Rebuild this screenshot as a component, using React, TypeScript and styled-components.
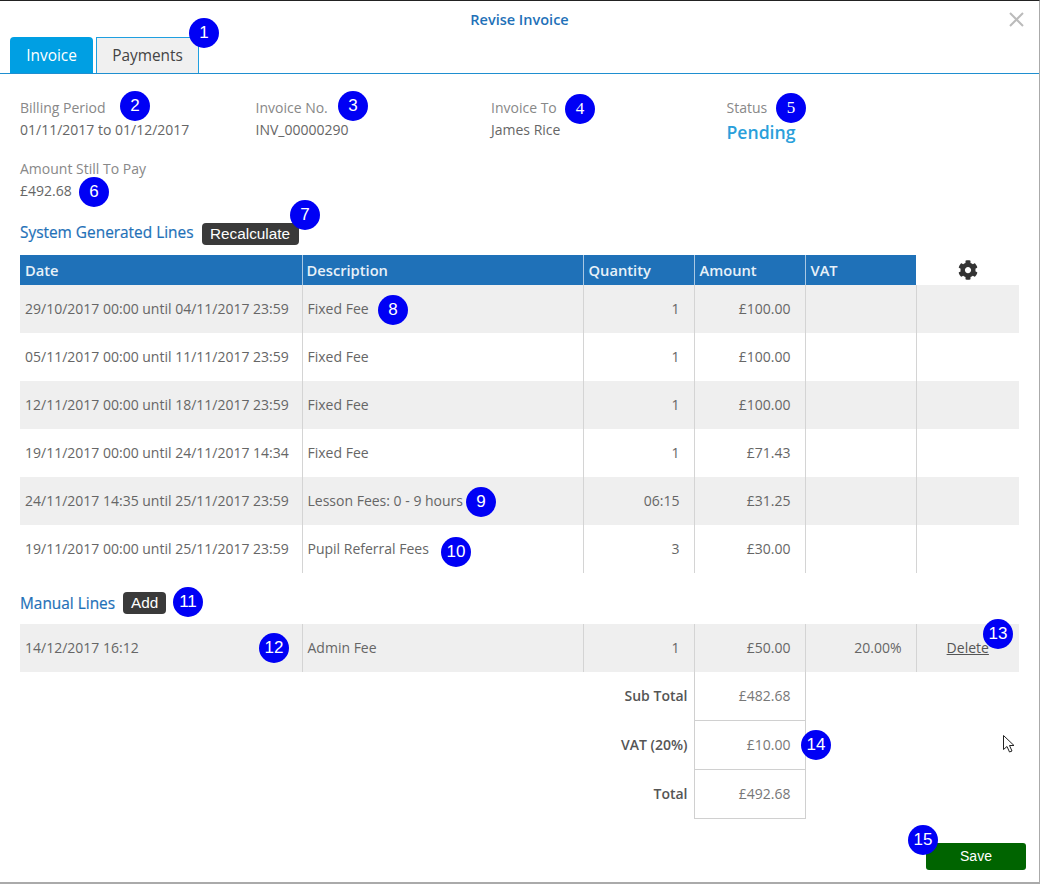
import React from 'react';
import styled, { createGlobalStyle } from 'styled-components';
import { FaCog } from 'react-icons/fa';

const GlobalStyle = createGlobalStyle`
  html, body {
    margin: 0;
    padding: 0;
    background: #fff;
  }
  body {
    font-family: "Open Sans", "Liberation Sans", sans-serif;
    font-size: 14px;
    color: #666;
  }
`;

const Modal = styled.div`
  position: relative;
  box-sizing: border-box;
  width: 1040px;
  height: 884px;
  background: #fff;
  border-top: 1px solid #222;
  border-right: 1px solid #aaa;
  border-bottom: 2px solid #aaa;
  overflow: hidden;
`;

const Header = styled.div`
  height: 36px;
  display: flex;
  align-items: center;
  justify-content: center;
`;

const Title = styled.h1`
  margin: 1px 0 0;
  font-size: 14.5px;
  font-weight: 600;
  color: #1f71b8;
  line-height: 35px;
`;

const CloseButton = styled.button`
  position: absolute;
  top: 11px;
  right: 15px;
  width: 15px;
  height: 15px;
  padding: 0;
  border: none;
  background: none;
  color: #bbb;
  display: flex;
`;

const TabBar = styled.div`
  height: 36px;
  display: flex;
  gap: 3px;
  padding-left: 10px;
  border-bottom: 1px solid #1f8fd0;
`;

const Tab = styled.div<{ $active?: boolean }>`
  box-sizing: border-box;
  height: 36px;
  display: flex;
  align-items: center;
  justify-content: center;
  font-size: 15.4px;
  width: ${p => (p.$active ? '83px' : '103px')};
  color: ${p => (p.$active ? '#fff' : '#444')};
  background: ${p => (p.$active ? '#009fe3' : '#f0f0f0')};
  border: ${p => (p.$active ? 'none' : '1px solid #1f9fe0')};
  border-bottom: none;
  border-radius: ${p => (p.$active ? '4px 4px 0 0' : '0')};
`;

const Content = styled.div`
  padding: 23px 20px 0;
`;

const InfoGrid = styled.div`
  display: grid;
  grid-template-columns: repeat(4, 235.5px);
  row-gap: 17px;
`;

const InfoItem = styled.div`
  display: flex;
  flex-direction: column;
  height: 44px;
`;

const InfoLabel = styled.span`
  color: #888;
  line-height: 22px;
`;

const InfoValue = styled.span`
  color: #666;
  line-height: 22px;
`;

const StatusValue = styled.span`
  color: #2a9fdb;
  font-size: 17.6px;
  font-weight: 600;
  line-height: 27px;
`;

const SectionHead = styled.div<{ $top: number }>`
  display: flex;
  align-items: center;
  gap: 8px;
  height: 22px;
  margin-top: ${p => p.$top}px;
`;

const SectionTitle = styled.h2<{ $lift?: number }>`
  margin: 0 0 ${p => p.$lift ?? 0}px;
  font-size: 15.4px;
  font-weight: 400;
  color: #1f71b8;
  -webkit-text-stroke: 0.2px #1f71b8;
`;

const DarkButton = styled.button<{ $width: number }>`
  box-sizing: border-box;
  width: ${p => p.$width}px;
  height: 22px;
  padding: 0;
  border: none;
  border-radius: 4px;
  background: #3a3a3a;
  color: #fff;
  font-family: "Liberation Sans", Arial, sans-serif;
  font-size: 15.3px;
`;

const Table = styled.table`
  width: 999px;
  margin-top: 10px;
  table-layout: fixed;
  border-collapse: collapse;
`;

const HeadCell = styled.th`
  height: 30px;
  padding: 0 5px;
  background: #1f71b8;
  color: #e8f1f8;
  font-size: 14.7px;
  font-weight: 600;
  text-align: left;
  border-left: 1px solid #a9c8e3;

  &:first-child {
    border-left: none;
  }
  &:nth-child(2) {
    padding-left: 4px;
  }
`;

const GearCell = styled.th`
  height: 30px;
  padding: 0;
  background: #fff;
  color: #333;
  text-align: center;
  vertical-align: middle;
  line-height: 0;
`;

const Row = styled.tr`
  &:nth-child(odd) td {
    background: #efefef;
  }
`;

const Cell = styled.td<{ $right?: boolean; $center?: boolean }>`
  height: 48px;
  box-sizing: border-box;
  padding: ${p => (p.$right ? '0 14px 1px 5px' : '0 5px 1px')};
  color: #666;
  font-size: 14px;
  white-space: nowrap;
  text-align: ${p => (p.$right ? 'right' : p.$center ? 'center' : 'left')};
  border-left: 1px solid #d4d4d4;

  &:first-child {
    border-left: none;
  }
`;

const DeleteLink = styled.a`
  color: #555;
  text-decoration: underline;
`;

const TotalRow = styled.tr`
  &:nth-child(2) td {
    height: 48px;
  }
`;

const TotalLabel = styled.td`
  height: 49px;
  box-sizing: border-box;
  padding: 0 6px 1px 0;
  text-align: right;
  font-weight: 600;
  color: #555;
`;

const TotalValue = styled.td`
  height: 49px;
  box-sizing: border-box;
  padding: 0 14px 1px 0;
  text-align: right;
  color: #777;
  border: 1px solid #d0d0d0;
  border-top: none;
`;

const Footer = styled.div`
  display: flex;
  justify-content: flex-end;
  margin-top: 24px;
  padding-right: 13px;
`;

const SaveButton = styled.button`
  width: 100px;
  height: 27px;
  padding: 0;
  border: none;
  border-radius: 3px;
  background: #006400;
  color: #fff;
  font-family: "Liberation Sans", Arial, sans-serif;
  font-size: 14px;
`;

const Badge = styled.span<{ $x: number; $y: number; $serif?: boolean }>`
  position: absolute;
  left: ${p => p.$x - 15}px;
  top: ${p => p.$y - 16}px;
  width: 30px;
  height: 30px;
  border-radius: 50%;
  background: #0000f5;
  color: #fff;
  font-family: ${p => (p.$serif ? '"Liberation Serif", serif' : '"Liberation Sans", Arial, sans-serif')};
  font-size: 17px;
  line-height: 30px;
  text-align: center;
`;

const Cursor = styled.svg`
  position: absolute;
  left: 1002px;
  top: 733px;
`;

const systemLines = [
  ['29/10/2017 00:00 until 04/11/2017 23:59', 'Fixed Fee', '1', '£100.00'],
  ['05/11/2017 00:00 until 11/11/2017 23:59', 'Fixed Fee', '1', '£100.00'],
  ['12/11/2017 00:00 until 18/11/2017 23:59', 'Fixed Fee', '1', '£100.00'],
  ['19/11/2017 00:00 until 24/11/2017 14:34', 'Fixed Fee', '1', '£71.43'],
  ['24/11/2017 14:35 until 25/11/2017 23:59', 'Lesson Fees: 0 - 9 hours', '06:15', '£31.25'],
  ['19/11/2017 00:00 until 25/11/2017 23:59', 'Pupil Referral Fees', '3', '£30.00'],
];

const totals = [
  ['Sub Total', '£482.68'],
  ['VAT (20%)', '£10.00'],
  ['Total', '£492.68'],
];

const badges: { n: number; x: number; y: number; serif?: boolean }[] = [
  { n: 1, x: 204, y: 33 },
  { n: 2, x: 135, y: 106 },
  { n: 3, x: 353, y: 106 },
  { n: 4, x: 580, y: 109, serif: true },
  { n: 5, x: 791, y: 108, serif: true },
  { n: 6, x: 94, y: 192 },
  { n: 7, x: 305, y: 215 },
  { n: 8, x: 393, y: 310 },
  { n: 9, x: 481, y: 502 },
  { n: 10, x: 456, y: 552 },
  { n: 11, x: 188, y: 602 },
  { n: 12, x: 274, y: 648 },
  { n: 13, x: 998, y: 634 },
  { n: 14, x: 816, y: 745 },
  { n: 15, x: 923, y: 840 },
];

const Columns = () => (
  <colgroup>
    <col width={282} />
    <col width={281} />
    <col width={111} />
    <col width={111} />
    <col width={111} />
    <col width={103} />
  </colgroup>
);

export default function App() {
  return (
    <Modal>
      <GlobalStyle />
      <Header>
        <Title>Revise Invoice</Title>
        <CloseButton aria-label="Close">
          <svg width="15" height="15" viewBox="0 0 15 15">
            <path d="M1 1L14 14M14 1L1 14" stroke="currentColor" strokeWidth="2" fill="none" />
          </svg>
        </CloseButton>
      </Header>
      <TabBar>
        <Tab $active>Invoice</Tab>
        <Tab>Payments</Tab>
      </TabBar>
      <Content>
        <InfoGrid>
          <InfoItem>
            <InfoLabel>Billing Period</InfoLabel>
            <InfoValue>01/11/2017 to 01/12/2017</InfoValue>
          </InfoItem>
          <InfoItem>
            <InfoLabel>Invoice No.</InfoLabel>
            <InfoValue>INV_00000290</InfoValue>
          </InfoItem>
          <InfoItem>
            <InfoLabel>Invoice To</InfoLabel>
            <InfoValue>James Rice</InfoValue>
          </InfoItem>
          <InfoItem>
            <InfoLabel>Status</InfoLabel>
            <StatusValue>Pending</StatusValue>
          </InfoItem>
          <InfoItem>
            <InfoLabel>Amount Still To Pay</InfoLabel>
            <InfoValue>£492.68</InfoValue>
          </InfoItem>
        </InfoGrid>

        <SectionHead $top={21}>
          <SectionTitle $lift={4}>System Generated Lines</SectionTitle>
          <DarkButton $width={97}>Recalculate</DarkButton>
        </SectionHead>
        <Table>
          <Columns />
          <thead>
            <tr>
              <HeadCell>Date</HeadCell>
              <HeadCell>Description</HeadCell>
              <HeadCell>Quantity</HeadCell>
              <HeadCell>Amount</HeadCell>
              <HeadCell>VAT</HeadCell>
              <GearCell>
                <FaCog size={20} />
              </GearCell>
            </tr>
          </thead>
          <tbody>
            {systemLines.map(line => (
              <Row key={line[0]}>
                <Cell>{line[0]}</Cell>
                <Cell>{line[1]}</Cell>
                <Cell $right>{line[2]}</Cell>
                <Cell $right>{line[3]}</Cell>
                <Cell />
                <Cell />
              </Row>
            ))}
          </tbody>
        </Table>

        <SectionHead $top={19}>
          <SectionTitle>Manual Lines</SectionTitle>
          <DarkButton $width={43}>Add</DarkButton>
        </SectionHead>
        <Table>
          <Columns />
          <tbody>
            <Row>
              <Cell>14/12/2017 16:12</Cell>
              <Cell>Admin Fee</Cell>
              <Cell $right>1</Cell>
              <Cell $right>£50.00</Cell>
              <Cell $right>20.00%</Cell>
              <Cell $center>
                <DeleteLink>Delete</DeleteLink>
              </Cell>
            </Row>
            {totals.map(([label, value]) => (
              <TotalRow key={label}>
                <TotalLabel colSpan={3}>{label}</TotalLabel>
                <TotalValue>{value}</TotalValue>
              </TotalRow>
            ))}
          </tbody>
        </Table>
      </Content>
      <Footer>
        <SaveButton>Save</SaveButton>
      </Footer>

      {badges.map(b => (
        <Badge key={b.n} $x={b.x} $y={b.y} $serif={b.serif}>
          {b.n}
        </Badge>
      ))}
      <Cursor width="14" height="20" viewBox="0 0 14 20">
        <path d="M1.5 1.5V15.5L5 12.5L7.5 18L10 17L7.5 11.5H12Z" fill="#fff" stroke="#222" strokeWidth="1" />
      </Cursor>
    </Modal>
  );
}
